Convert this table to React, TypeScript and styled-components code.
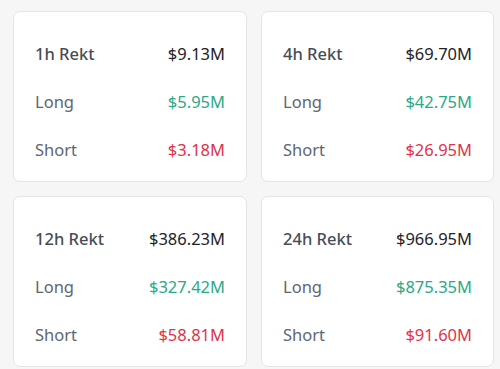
import styled, { createGlobalStyle } from "styled-components";

type Tone = "total" | "long" | "short";

interface Stat {
	period: string;
	total: string;
	long: string;
	short: string;
}

const stats: Stat[] = [
	{ period: "1h", total: "$9.13M", long: "$5.95M", short: "$3.18M" },
	{ period: "4h", total: "$69.70M", long: "$42.75M", short: "$26.95M" },
	{ period: "12h", total: "$386.23M", long: "$327.42M", short: "$58.81M" },
	{ period: "24h", total: "$966.95M", long: "$875.35M", short: "$91.60M" },
];

const GlobalStyle = createGlobalStyle`
    body {
        margin: 0;
        background: #f6f6f6;
        font-family: "Noto Sans", "Liberation Sans", sans-serif;
    }
`;

const App = () => {
	return (
		<>
			<GlobalStyle />
			<StyledGrid>
				{stats.map((s) => (
					<StyledCard key={s.period}>
						<StyledRow>
							<StyledTitle>{s.period} Rekt</StyledTitle>
							<StyledValue $tone="total">{s.total}</StyledValue>
						</StyledRow>
						<StyledRow>
							<StyledLabel>Long</StyledLabel>
							<StyledValue $tone="long">{s.long}</StyledValue>
						</StyledRow>
						<StyledRow>
							<StyledLabel>Short</StyledLabel>
							<StyledValue $tone="short">{s.short}</StyledValue>
						</StyledRow>
					</StyledCard>
				))}
			</StyledGrid>
		</>
	);
};

const toneColors: Record<Tone, string> = {
	total: "#1e2329",
	long: "#2aa987",
	short: "#df3349",
};

const StyledGrid = styled.div`
    display: grid;
    grid-template-columns: 234px 233px;
    gap: 14px;
    padding: 11px 0 0 13px;
`;

const StyledCard = styled.div`
    display: flex;
    flex-direction: column;
    gap: 14px;

    padding: 24px 21px 15px;
    height: 171px;
    box-sizing: border-box;

    background: #fff;
    border: 1px solid #e5e5e5;
    border-radius: 7px;
`;

const StyledRow = styled.div`
    display: flex;
    justify-content: space-between;
    align-items: center;
    height: 34px;
    font-size: 16.5px;
`;

const StyledTitle = styled.span`
    color: #474d57;
    font-weight: 500;
`;

const StyledLabel = styled.span`
    color: #5e6673;
`;

const StyledValue = styled.span<{ $tone: Tone }>`
    color: ${({ $tone }) => toneColors[$tone]};
`;

export default App;
